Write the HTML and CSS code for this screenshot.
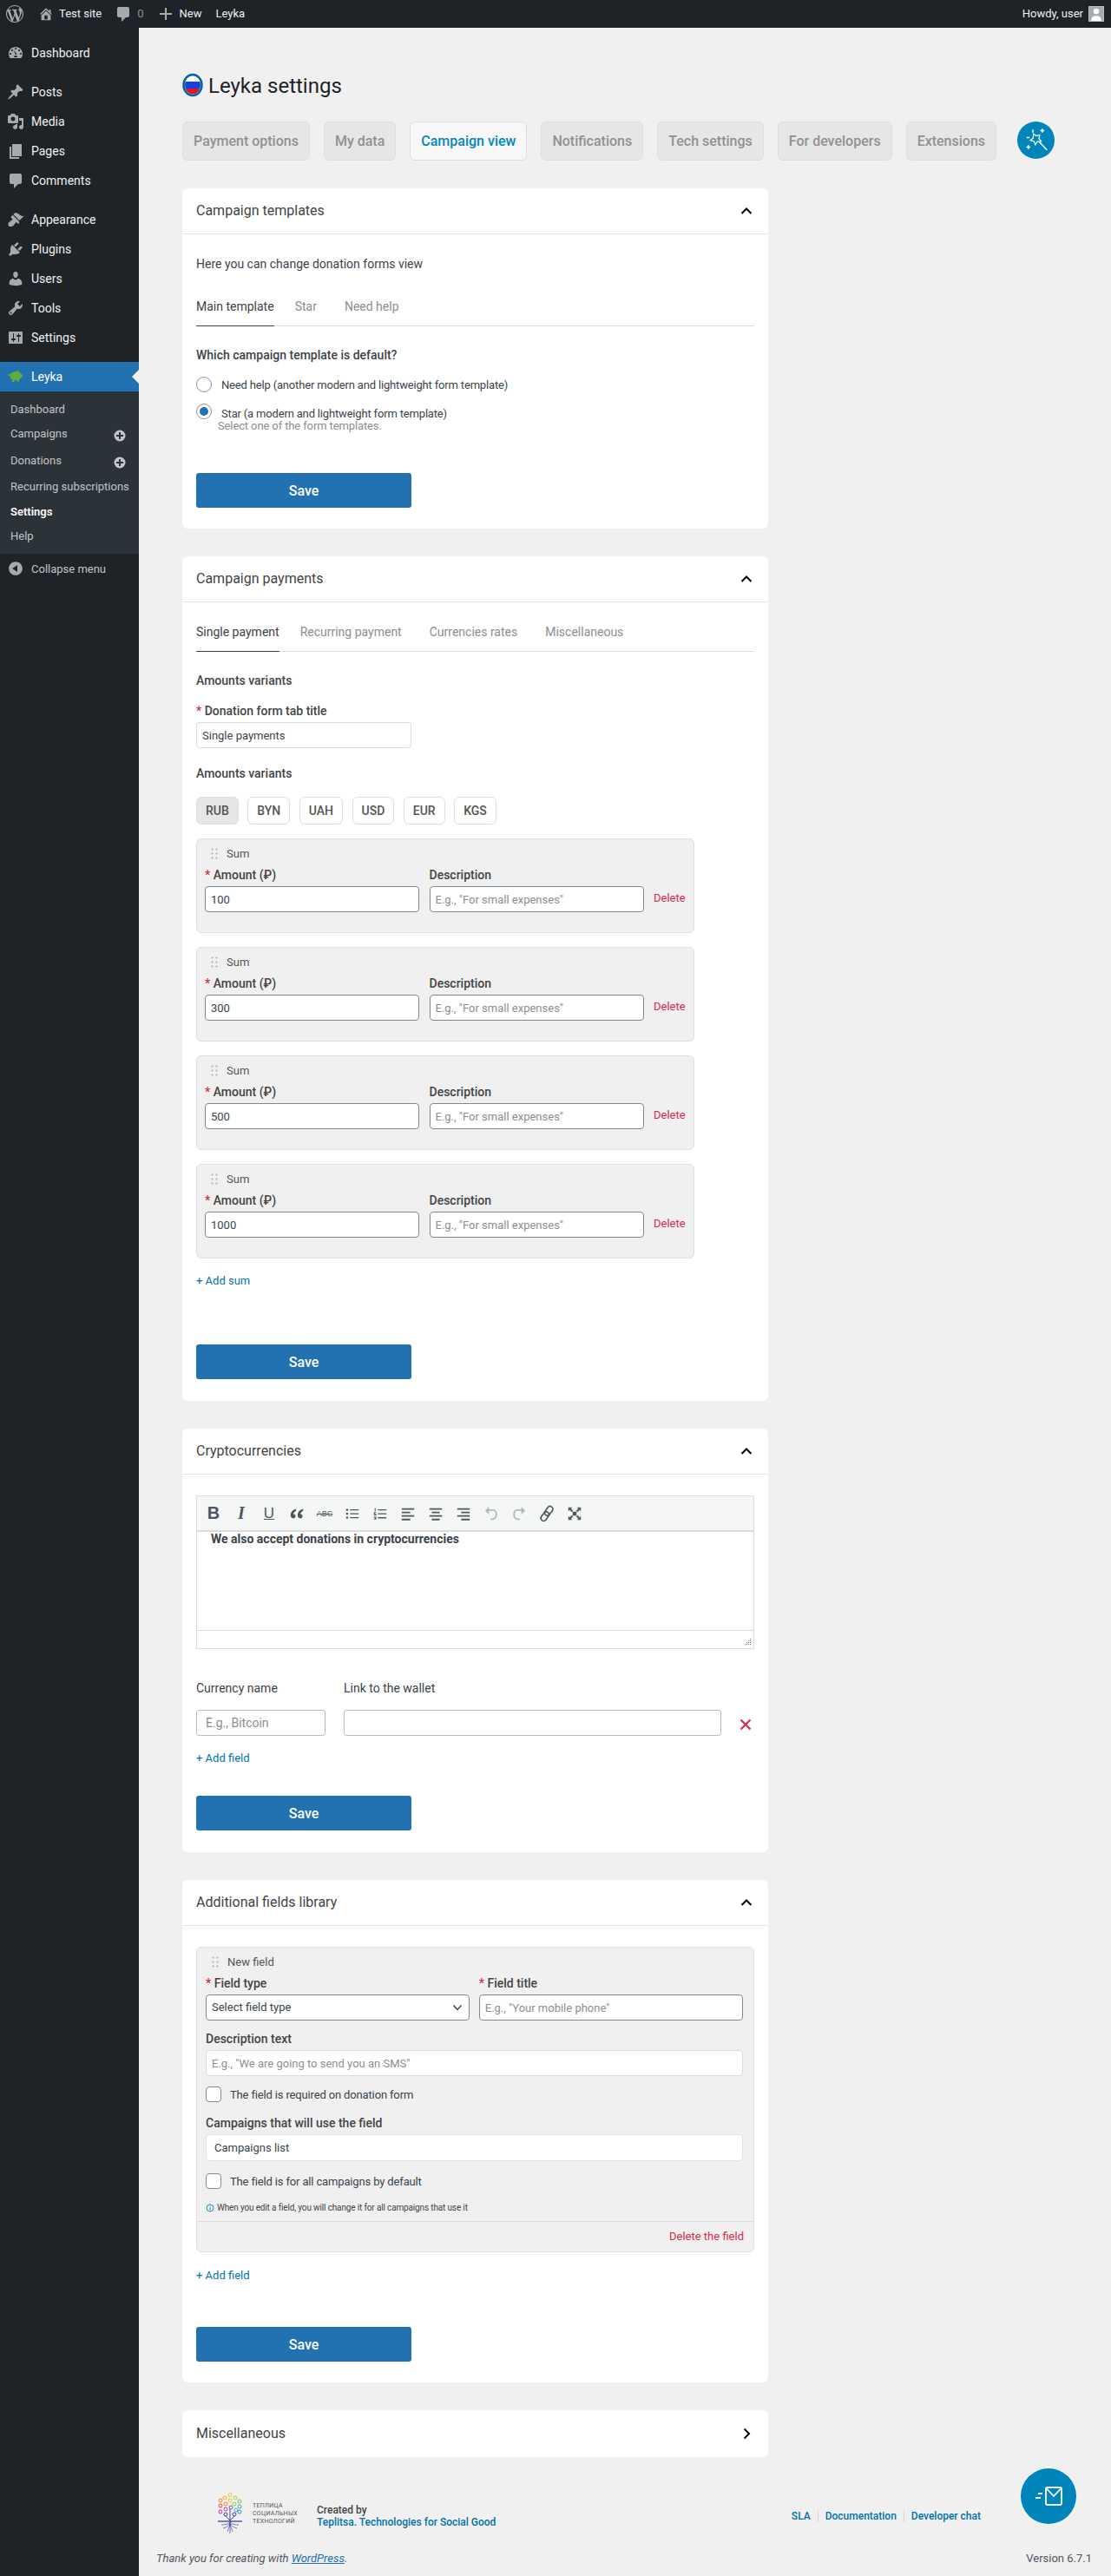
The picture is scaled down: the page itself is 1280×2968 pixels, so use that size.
FILE: index.html
```html
<!DOCTYPE html>
<html lang="en">
<head>
    <meta charset="UTF-8">
    <title>Leyka settings</title>
    <link rel="stylesheet" href="styles.css">
</head>
<body>
    <header class="adminbar">
        <a class="bar-item bar-logo"><svg class="bar-icon" viewBox="0 0 20 20"><path d="M20 10c0-5.51-4.49-10-10-10C4.48 0 0 4.49 0 10c0 5.52 4.48 10 10 10 5.51 0 10-4.48 10-10zM7.78 15.37L4.37 6.22c.55-.02 1.17-.08 1.17-.08.5-.06.44-1.13-.06-1.11 0 0-1.45.11-2.37.11-.18 0-.37 0-.58-.01C4.12 2.69 6.87 1.11 10 1.11c2.33 0 4.45.87 6.05 2.34-.68-.11-1.65.39-1.65 1.58 0 .74.45 1.36.9 2.1.35.61.55 1.36.55 2.46 0 1.49-1.4 5-1.4 5l-3.03-8.37c.54-.02.82-.17.82-.17.5-.05.44-1.25-.06-1.22 0 0-1.44.12-2.38.12-.87 0-2.33-.12-2.33-.12-.5-.03-.56 1.2-.06 1.22l.92.08 1.26 3.41zM17.41 10c.24-.64.74-1.87.43-4.25.7 1.29 1.05 2.71 1.05 4.25 0 3.29-1.73 6.24-4.4 7.78.97-2.59 1.94-5.2 2.92-7.78zM6.1 18.09C3.12 16.65 1.11 13.53 1.11 10c0-1.3.23-2.48.72-3.59C3.25 10.3 4.67 14.2 6.1 18.09zm4.03-6.63l2.58 6.98c-.86.29-1.76.45-2.71.45-.79 0-1.57-.11-2.29-.33.81-2.38 1.62-4.74 2.42-7.1z"/></svg></a>
        <a class="bar-item bar-site"><svg class="bar-icon" viewBox="0 0 20 20"><path d="M16 8.5l1.53 1.53-1.06 1.06L10 4.62l-6.47 6.47-1.06-1.06L10 2.5l4 4v-2h2v4zm-6-2.46l6 5.99V18H4v-5.97zM12 17v-5H8v5h4z"/></svg>Test site</a>
        <a class="bar-item bar-comments"><svg class="bar-icon" viewBox="0 0 20 20"><path d="M5 2h10c1.1 0 2 .9 2 2v8c0 1.1-.9 2-2 2h-2l-5 5v-5H5c-1.1 0-2-.9-2-2V4c0-1.1.9-2 2-2z"/></svg><span class="bar-count">0</span></a>
        <a class="bar-item bar-new"><svg class="bar-icon" viewBox="0 0 20 20"><path d="M11 3v6h6v2h-6v6H9v-6H3V9h6V3z"/></svg>New</a>
        <a class="bar-item bar-leyka">Leyka</a>
        <a class="bar-howdy">Howdy, user
            <span class="avatar"><svg viewBox="0 0 18 22"><circle cx="9" cy="7" r="4.5" fill="#fff"/><path d="M1 22c0-6 3-8 8-8s8 2 8 8z" fill="#fff"/></svg></span>
        </a>
    </header>

    <div class="layout">
        <aside class="sidebar">
            <nav class="menu">
                <a class="menu-item"><svg viewBox="0 0 20 20"><path fill-rule="evenodd" d="M3.76 16h12.48c1.1-1.37 1.76-3.11 1.76-5 0-4.42-3.58-8-8-8s-8 3.58-8 8c0 1.89.66 3.63 1.76 5zM10 4c.55 0 1 .45 1 1s-.45 1-1 1-1-.45-1-1 .45-1 1-1zM6 6c.55 0 1 .45 1 1s-.45 1-1 1-1-.45-1-1 .45-1 1-1zm2 9c0-1.1.9-2 2-2s2 .9 2 2H8zm2-3c-.55-.4-2-5-2-5l3.28 4.13c-.39.27-.86.87-1.28.87zM14 6c.55 0 1 .45 1 1s-.45 1-1 1-1-.45-1-1 .45-1 1-1zM4 10c.55 0 1 .45 1 1s-.45 1-1 1-1-.45-1-1 .45-1 1-1zm12 0c.55 0 1 .45 1 1s-.45 1-1 1-1-.45-1-1 .45-1 1-1z"/></svg>Dashboard</a>
                <div class="menu-sep"></div>
                <a class="menu-item"><svg viewBox="0 0 20 20"><path d="M10.44 3.02l1.82-1.82 6.36 6.35-1.83 1.82c-1.05-.68-2.48-.57-3.41.36l-.75.75c-.92.93-1.04 2.35-.35 3.41l-1.83 1.82-2.41-2.41-2.8 2.79c-.42.42-3.38 2.71-3.8 2.29s1.86-3.39 2.28-3.81l2.79-2.79L4.1 9.36l1.83-1.82c1.05.69 2.48.57 3.4-.36l.75-.75c.93-.92 1.05-2.35.36-3.41z"/></svg>Posts</a>
                <a class="menu-item"><svg viewBox="0 0 20 20"><path fill-rule="evenodd" d="M13 11V4c0-.55-.45-1-1-1h-1.67L9 1H5L3.67 3H2c-.55 0-1 .45-1 1v7c0 .55.45 1 1 1h10c.55 0 1-.45 1-1zM7 4.5c1.38 0 2.5 1.12 2.5 2.5S8.38 9.5 7 9.5 4.5 8.38 4.5 7 5.62 4.5 7 4.5zM14 6h5v10.5c0 1.38-1.12 2.5-2.5 2.5S14 17.88 14 16.5s1.12-2.5 2.5-2.5c.17 0 .34.02.5.05V9h-3V6zm-4 8.05V13h2v3.5c0 1.38-1.12 2.5-2.5 2.5S7 17.88 7 16.5 8.12 14 9.5 14c.17 0 .34.02.5.05z"/></svg>Media</a>
                <a class="menu-item"><svg viewBox="0 0 20 20"><path d="M6 2h11v14H6zM3 5h2v12h9v2H3z"/></svg>Pages</a>
                <a class="menu-item"><svg viewBox="0 0 20 20"><path d="M5 2h10c1.1 0 2 .9 2 2v8c0 1.1-.9 2-2 2h-2l-5 5v-5H5c-1.1 0-2-.9-2-2V4c0-1.1.9-2 2-2z"/></svg>Comments</a>
                <div class="menu-sep"></div>
                <a class="menu-item"><svg viewBox="0 0 20 20"><path d="M14.48 11.06L7.41 3.99l1.5-1.5c.5-.56 2.3-.47 3.51.32 1.21.8 1.43 1.28 2.91 2.1 1.18.64 2.45 1.26 4.45.85zm-.71.71L6.7 4.7 4.93 6.47c-.39.39-.39 1.02 0 1.41l1.06 1.06c.39.39.39 1.03 0 1.42-.6.6-1.43 1.11-2.21 1.69-.35.26-.7.53-1.01.84C1.43 13.23.91 15.09 2 17.5c2.41 1.09 4.27.57 5.61-.77.31-.31.58-.66.84-1.01.58-.78 1.09-1.61 1.69-2.21.39-.39 1.03-.39 1.42 0l1.06 1.06c.39.39 1.02.39 1.41 0z"/></svg>Appearance</a>
                <a class="menu-item"><svg viewBox="0 0 20 20"><path d="M13.11 4.36L9.87 7.6 8 5.73l3.24-3.24c.35-.34 1.05-.2 1.56.32.52.51.66 1.21.31 1.55zm-8 1.77l.91-1.12 9.01 9.01-1.19.84c-.71.71-2.63 1.16-3.82 1.16H6.14L4.9 17.26c-.59.59-1.54.59-2.12 0-.59-.58-.59-1.53 0-2.12l1.24-1.24v-3.88c0-1.13.4-3.19 1.09-3.89zm7.26 3.97l3.24-3.24c.34-.35 1.04-.21 1.55.31.52.51.66 1.21.31 1.55l-3.24 3.25z"/></svg>Plugins</a>
                <a class="menu-item"><svg viewBox="0 0 20 20"><path d="M10 9.25c-2.27 0-2.73-3.44-2.73-3.44C7 4.02 7.82 2 9.97 2c2.16 0 2.98 2.02 2.71 3.81 0 0-.41 3.44-2.68 3.44zm0 2.57L12.72 10c2.39 0 4.52 2.33 4.52 4.53v2.49s-3.65 1.13-7.24 1.13c-3.65 0-7.24-1.13-7.24-1.13v-2.49c0-2.25 1.94-4.48 4.47-4.48z"/></svg>Users</a>
                <a class="menu-item"><svg viewBox="0 0 20 20"><path fill-rule="evenodd" d="M16.68 9.77c-1.34 1.34-3.3 1.67-4.95.99l-5.41 6.52c-.99.99-2.59.99-3.58 0s-.99-2.59 0-3.57l6.52-5.42c-.68-1.65-.35-3.61.99-4.95 1.28-1.28 3.12-1.62 4.72-1.06l-2.89 2.89 2.82 2.82 2.86-2.87c.53 1.58.18 3.39-1.08 4.65zM3.81 16.21c.4.39 1.04.39 1.43 0 .4-.4.4-1.04 0-1.43-.39-.4-1.03-.4-1.43 0-.39.39-.39 1.03 0 1.43z"/></svg>Tools</a>
                <a class="menu-item"><svg viewBox="0 0 20 20"><path fill-rule="evenodd" d="M18 16V4c0-.55-.45-1-1-1H3c-.55 0-1 .45-1 1v12c0 .55.45 1 1 1h14c.55 0 1-.45 1-1zM8 11h1c.55 0 1 .45 1 1s-.45 1-1 1H8v1.5c0 .28-.22.5-.5.5s-.5-.22-.5-.5V13H6c-.55 0-1-.45-1-1s.45-1 1-1h1V5.5c0-.28.22-.5.5-.5s.5.22.5.5V11zm5-2h-1c-.55 0-1-.45-1-1s.45-1 1-1h1V5.5c0-.28.22-.5.5-.5s.5.22.5.5V7h1c.55 0 1 .45 1 1s-.45 1-1 1h-1v5.5c0 .28-.22.5-.5.5s-.5-.22-.5-.5V9z"/></svg>Settings</a>
                <div class="menu-sep"></div>
                <a class="menu-item current"><svg viewBox="0 0 20 20"><path fill="#5fae3c" d="M4 7c1-2 4-3 7-3 1 0 1.500-1 2.500-1.500L13.500 4.500C15 5 16 6 16.500 7.500H18v3h-1.500c-.5 1.500-1.500 2.500-2.500 3v2h-2.500v-1.500h-3V16H6v-2.500C4 12.500 3 10 4 7z"/><circle cx="2.500" cy="8" r="1.200" fill="#5fae3c"/></svg>Leyka</a>
                <div class="submenu">
                    <a class="sub-item">Dashboard</a>
                    <a class="sub-item">Campaigns<svg class="sub-plus" viewBox="0 0 14 14"><circle cx="7" cy="7" r="6.500" fill="#c3c4c7"/><path d="M6 3h2v3h3v2H8v3H6V8H3V6h3z" fill="#2c3338"/></svg></a>
                    <a class="sub-item sub-donations">Donations<svg class="sub-plus" viewBox="0 0 14 14"><circle cx="7" cy="7" r="6.500" fill="#c3c4c7"/><path d="M6 3h2v3h3v2H8v3H6V8H3V6h3z" fill="#2c3338"/></svg></a>
                    <a class="sub-item sub-recurring">Recurring subscriptions</a>
                    <a class="sub-item sub-active">Settings</a>
                    <a class="sub-item">Help</a>
                </div>
                <a class="menu-item collapse"><svg viewBox="0 0 20 20"><path d="M10 2.160c4.330 0 7.840 3.510 7.840 7.840s-3.510 7.840-7.840 7.840S2.160 14.330 2.160 10 5.710 2.160 10 2.160zm2 11.720V6.120L6.180 9.970z"/></svg>Collapse menu</a>
            </nav>
        </aside>

        <main class="content">
            <h1 class="page-title">
                <svg class="flag" viewBox="0 0 24 28"><defs><clipPath id="flag-clip"><ellipse cx="12" cy="14" rx="9" ry="10.500"/></clipPath></defs><g clip-path="url(#flag-clip)"><rect width="24" height="10" fill="#fff"/><rect y="10" width="24" height="8" fill="#1742d6"/><rect y="18" width="24" height="10" fill="#e0122c"/></g><ellipse cx="12" cy="14" rx="10.500" ry="12" fill="none" stroke="#00659c" stroke-width="2.500"/></svg>
                Leyka settings
            </h1>

            <div class="main-tabs">
                <a class="main-tab">Payment options</a>
                <a class="main-tab">My data</a>
                <a class="main-tab active">Campaign view</a>
                <a class="main-tab">Notifications</a>
                <a class="main-tab">Tech settings</a>
                <a class="main-tab">For developers</a>
                <a class="main-tab">Extensions</a>
                <a class="wand">
                    <svg viewBox="0 0 44 44" fill="none" stroke="#fff" stroke-width="1.300">
                        <path d="M19 14.500l3.500 2.500 4-1.300-1 4.300 2.600 3.300-4.300.3-2.500 3.700-1.600-4-4.200-1.200 3.300-2.800z"/>
                        <path d="M26 24l9 9.500" stroke-width="1.600"/>
                        <path d="M18.500 9.500v3.500M11 19h3.500M29.500 8.500v4.500M27.200 10.700h4.600M13 28v4.500M10.700 30.200h4.600" stroke-width="1.500"/>
                    </svg>
                </a>
            </div>

            <section class="card card-templates">
                <div class="card-head">
                    <h2>Campaign templates</h2>
                    <svg class="chevron" viewBox="0 0 14 14"><path d="M1.500 10L7 4.500 12.500 10" fill="none" stroke="#000" stroke-width="2"/></svg>
                </div>
                <div class="card-body">
                    <p class="intro">Here you can change donation forms view</p>
                    <div class="sub-tabs">
                        <a class="sub-tab active">Main template</a>
                        <a class="sub-tab">Star</a>
                        <a class="sub-tab">Need help</a>
                    </div>
                    <div class="question">Which campaign template is default?</div>
                    <label class="radio-row"><input type="radio" name="tpl"><span>Need help (another modern and lightweight form template)</span></label>
                    <label class="radio-row radio-second"><input type="radio" name="tpl" checked><span>Star (a modern and lightweight form template)</span></label>
                    <div class="hint">Select one of the form templates.</div>
                    <button class="save save-templates">Save</button>
                </div>
            </section>

            <section class="card">
                <div class="card-head">
                    <h2>Campaign payments</h2>
                    <svg class="chevron" viewBox="0 0 14 14"><path d="M1.500 10L7 4.500 12.500 10" fill="none" stroke="#000" stroke-width="2"/></svg>
                </div>
                <div class="card-body">
                    <div class="sub-tabs sub-tabs-payments">
                        <a class="sub-tab active">Single payment</a>
                        <a class="sub-tab">Recurring payment</a>
                        <a class="sub-tab">Currencies rates</a>
                        <a class="sub-tab">Miscellaneous</a>
                    </div>
                    <h3 class="section-title first">Amounts variants</h3>
                    <div class="field-label tab-title-label"><i>*</i> Donation form tab title</div>
                    <input class="text-input soft tab-title-input" value="Single payments">
                    <h3 class="section-title">Amounts variants</h3>
                    <div class="currencies">
                        <a class="currency active">RUB</a>
                        <a class="currency">BYN</a>
                        <a class="currency">UAH</a>
                        <a class="currency">USD</a>
                        <a class="currency">EUR</a>
                        <a class="currency">KGS</a>
                    </div>

                    <div class="sum-box">
                        <div class="box-head"><span class="drag"></span>Sum</div>
                        <div class="sum-row">
                            <div class="sum-col"><div class="field-label"><i>*</i> Amount (₽)</div><input class="text-input" value="100"></div>
                            <div class="sum-col"><div class="field-label">Description</div><input class="text-input" placeholder="E.g., &quot;For small expenses&quot;"></div>
                            <a class="delete">Delete</a>
                        </div>
                    </div>
                    <div class="sum-box">
                        <div class="box-head"><span class="drag"></span>Sum</div>
                        <div class="sum-row">
                            <div class="sum-col"><div class="field-label"><i>*</i> Amount (₽)</div><input class="text-input" value="300"></div>
                            <div class="sum-col"><div class="field-label">Description</div><input class="text-input" placeholder="E.g., &quot;For small expenses&quot;"></div>
                            <a class="delete">Delete</a>
                        </div>
                    </div>
                    <div class="sum-box">
                        <div class="box-head"><span class="drag"></span>Sum</div>
                        <div class="sum-row">
                            <div class="sum-col"><div class="field-label"><i>*</i> Amount (₽)</div><input class="text-input" value="500"></div>
                            <div class="sum-col"><div class="field-label">Description</div><input class="text-input" placeholder="E.g., &quot;For small expenses&quot;"></div>
                            <a class="delete">Delete</a>
                        </div>
                    </div>
                    <div class="sum-box">
                        <div class="box-head"><span class="drag"></span>Sum</div>
                        <div class="sum-row">
                            <div class="sum-col"><div class="field-label"><i>*</i> Amount (₽)</div><input class="text-input" value="1000"></div>
                            <div class="sum-col"><div class="field-label">Description</div><input class="text-input" placeholder="E.g., &quot;For small expenses&quot;"></div>
                            <a class="delete">Delete</a>
                        </div>
                    </div>
                    <a class="add-link add-sum">+ Add sum</a>
                    <button class="save save-payments">Save</button>
                </div>
            </section>

            <section class="card">
                <div class="card-head">
                    <h2>Cryptocurrencies</h2>
                    <svg class="chevron" viewBox="0 0 14 14"><path d="M1.500 10L7 4.500 12.500 10" fill="none" stroke="#000" stroke-width="2"/></svg>
                </div>
                <div class="card-body crypto-body">
                    <div class="editor">
                        <div class="toolbar">
                            <span class="tool tool-b">B</span>
                            <span class="tool tool-i">I</span>
                            <span class="tool tool-u">U</span>
                            <span class="tool"><svg viewBox="0 0 20 20"><path d="M9 4C5 5 2 8 2 12c0 2.200 1 4 3.300 4 1.700 0 3-1.200 3-2.800S7.200 10.400 5.500 10.600C5.700 8.700 7.300 7 9 6.300zM18 4c-4 1-7 4-7 8 0 2.200 1 4 3.300 4 1.700 0 3-1.200 3-2.800s-1.100-2.800-2.800-2.600c.2-1.900 1.800-3.600 3.500-4.300z"/></svg></span>
                            <span class="tool tool-abc">ABC</span>
                            <span class="tool"><svg viewBox="0 0 20 20"><path d="M2 4h2.500v2.500H2zM2 9h2.500v2.500H2zM2 14h2.500v2.500H2zM7 4.500h11v1.200H7zM7 9.500h11v1.200H7zM7 14.500h11v1.200H7z"/></svg></span>
                            <span class="tool"><svg viewBox="0 0 20 20"><path d="M7 4.500h11v1.200H7zM7 9.500h11v1.200H7zM7 14.500h11v1.500H7zM3 3h1.200v4H3zM2 8h3v1H3.500v1H5v2.500H2v-1h2v-.7H2zM2 14h3v3.500H2v-1h2V16H3v-.7h1V15H2z"/></svg></span>
                            <span class="tool"><svg viewBox="0 0 20 20"><path d="M2 3h16v2H2zM2 7.500h11v2H2zM2 12h16v2H2zM2 16.500h11v2H2z"/></svg></span>
                            <span class="tool"><svg viewBox="0 0 20 20"><path d="M2 3h16v2H2zM5 7.500h10v2H5zM2 12h16v2H2zM5 16.500h10v2H5z"/></svg></span>
                            <span class="tool"><svg viewBox="0 0 20 20"><path d="M2 3h16v2H2zM7 7.500h11v2H7zM2 12h16v2H2zM7 16.500h11v2H7z"/></svg></span>
                            <span class="tool tool-off"><svg viewBox="0 0 20 20"><path d="M2 6l5-5v3.500h5.500c3 0 5 2.500 5 6.500s-2.500 7-6 7H9v-2h2.500c2.500 0 4-2 4-5s-1.200-4.500-3-4.500H7V11z"/></svg></span>
                            <span class="tool tool-off"><svg viewBox="0 0 20 20"><path d="M18 6l-5-5v3.500H7.500c-3 0-5 2.500-5 6.500s2.500 7 6 7H11v-2H8.500c-2.500 0-4-2-4-5s1.200-4.500 3-4.500H13V11z"/></svg></span>
                            <span class="tool"><svg class="link-icon" viewBox="0 0 20 20"><g transform="rotate(-55 10 10)"><rect x=".5" y="6.800" width="11.500" height="6.400" rx="3.200"/><rect x="8" y="6.800" width="11.500" height="6.400" rx="3.200"/></g></svg></span>
                            <span class="tool"><svg viewBox="0 0 20 20"><path d="M2 2h5l-1.700 1.700L8 6.500 6.500 8 3.700 5.300 2 7zM18 2v5l-1.700-1.700L13.500 8 12 6.500l2.700-2.800L13 2zM2 18v-5l1.700 1.700L6.500 12 8 13.500l-2.700 2.800L7 18zM18 18h-5l1.700-1.700L12 13.500l1.500-1.500 2.800 2.700L18 13z"/><rect x="7.500" y="7.500" width="5" height="5"/></svg></span>
                        </div>
                        <div class="editor-text">We also accept donations in cryptocurrencies</div>
                        <div class="editor-status"><svg viewBox="0 0 10 10"><path d="M8 1h1v1H8zM8 3h1v1H8zM6 3h1v1H6zM8 5h1v1H8zM6 5h1v1H6zM4 5h1v1H4zM8 7h1v1H8zM6 7h1v1H6zM4 7h1v1H4zM2 7h1v1H2z" fill="#777"/></svg></div>
                    </div>
                    <div class="wallet-labels">
                        <span class="wallet-name">Currency name</span>
                        <span>Link to the wallet</span>
                    </div>
                    <div class="wallet-row">
                        <input class="text-input grey wallet-input-name" placeholder="E.g., Bitcoin">
                        <input class="text-input grey wallet-input-link">
                        <svg class="wallet-x" viewBox="0 0 14 14"><path d="M1.500 1.500l11 11M12.500 1.500l-11 11" stroke="#d72a4d" stroke-width="2.200"/></svg>
                    </div>
                    <a class="add-link add-wallet">+ Add field</a>
                    <button class="save save-crypto">Save</button>
                </div>
            </section>

            <section class="card">
                <div class="card-head">
                    <h2>Additional fields library</h2>
                    <svg class="chevron" viewBox="0 0 14 14"><path d="M1.500 10L7 4.500 12.500 10" fill="none" stroke="#000" stroke-width="2"/></svg>
                </div>
                <div class="card-body fields-body">
                    <div class="field-box">
                        <div class="field-main">
                            <div class="box-head"><span class="drag"></span>New field</div>
                            <div class="field-pair">
                                <div class="pair-col">
                                    <div class="field-label"><i>*</i> Field type</div>
                                    <div class="select-like">Select field type<svg viewBox="0 0 12 12"><path d="M1.500 3.500L6 8.500l4.500-5" fill="none" stroke="#444" stroke-width="1.500"/></svg></div>
                                </div>
                                <div class="pair-col">
                                    <div class="field-label"><i>*</i> Field title</div>
                                    <input class="text-input" placeholder="E.g., &quot;Your mobile phone&quot;">
                                </div>
                            </div>
                            <div class="field-label desc-label">Description text</div>
                            <input class="text-input soft wide" placeholder="E.g., &quot;We are going to send you an SMS&quot;">
                            <label class="check-row"><input type="checkbox"><span>The field is required on donation form</span></label>
                            <div class="field-label campaigns-label">Campaigns that will use the field</div>
                            <div class="campaigns-list">Campaigns list</div>
                            <label class="check-row check-all"><input type="checkbox"><span>The field is for all campaigns by default</span></label>
                            <div class="field-note"><svg viewBox="0 0 10 10"><circle cx="5" cy="5" r="4" fill="none" stroke="#1f8fc4"/><path d="M4.500 4.300h1v3.200h-1zM4.500 2.500h1v1h-1z" fill="#1f8fc4"/></svg>When you edit a field, you will change it for all campaigns that use it</div>
                        </div>
                        <div class="field-foot"><a class="delete">Delete the field</a></div>
                    </div>
                    <a class="add-link add-field">+ Add field</a>
                    <button class="save save-fields">Save</button>
                </div>
            </section>

            <section class="card card-closed">
                <div class="card-head">
                    <h2>Miscellaneous</h2>
                    <svg class="chevron" viewBox="0 0 14 14"><path d="M4.500 1.500L10 7l-5.500 5.500" fill="none" stroke="#000" stroke-width="2"/></svg>
                </div>
            </section>

            <div class="credits">
                <div class="credits-left">
                    <svg class="tree" viewBox="0 0 28 48" fill="none" stroke-width="1">
                        <circle cx="14" cy="2.500" r="2" stroke="#f2c230"/><circle cx="8" cy="6" r="2" stroke="#f5b02a"/><circle cx="20" cy="6" r="2" stroke="#b9cf35"/>
                        <circle cx="3" cy="9" r="2" stroke="#f58a1f"/><circle cx="14" cy="9" r="2" stroke="#f2c230"/><circle cx="25" cy="10" r="2" stroke="#7fbf4d"/>
                        <circle cx="3" cy="15" r="2" stroke="#ee3b44"/><circle cx="9" cy="13" r="2" stroke="#f58a1f"/><circle cx="19" cy="13" r="2" stroke="#8cc63f"/><circle cx="25" cy="16" r="2" stroke="#3fa9a0"/>
                        <circle cx="3" cy="22" r="2" stroke="#e4287c"/><circle cx="9" cy="19" r="2" stroke="#c2398f"/><circle cx="15" cy="17" r="2" stroke="#6a5bb0"/><circle cx="21" cy="20" r="2" stroke="#3fa9c9"/><circle cx="25" cy="22" r="2" stroke="#2f89c5"/>
                        <circle cx="9" cy="25" r="2" stroke="#36469c"/><circle cx="19" cy="25" r="2" stroke="#36469c"/>
                        <path d="M14 19v20M9 27l5 5 5-5" stroke="#36469c"/><path d="M0 33h28" stroke="#36469c" stroke-width="1.300"/>
                        <path d="M14 34c-3 3-7 3-10 3M14 35c-2 4-5 5-8 6M14 36c-1 4-2 6-3 9M14 36v11M14 36c1 4 2 6 3 9M14 35c2 4 5 5 8 6M14 34c3 3 7 3 10 3" stroke="#36469c" stroke-width=".7"/>
                    </svg>
                    <div class="tree-text">ТЕПЛИЦА<br>СОЦИАЛЬНЫХ<br>ТЕХНОЛОГИЙ</div>
                    <div class="created">Created by<br><a>Teplitsa. Technologies for Social Good</a></div>
                </div>
                <div class="credits-links">
                    <a>SLA</a><a>Documentation</a><a>Developer chat</a>
                </div>
            </div>

            <footer class="wp-footer">
                <span class="thanks">Thank you for creating with <a>WordPress</a>.</span>
                <span>Version 6.7.1</span>
            </footer>
        </main>
    </div>

    <a class="fab">
        <svg viewBox="0 0 64 64" fill="none" stroke="#fff" stroke-width="1.800">
            <rect x="29" y="22" width="18" height="20" rx="1.500"/>
            <path d="M29.500 23l8.500 9 8.500-9"/>
            <path d="M17 34h6M20 29h5" stroke-width="2"/>
        </svg>
    </a>
</body>
</html>
```

FILE: styles.css
```css
* {
    box-sizing: border-box;
}

body {
    margin: 0;
    background: #f0f0f0;
    color: #3c434a;
    font-family: Roboto, sans-serif;
    font-size: 13px;
}

a {
    text-decoration: none;
    color: inherit;
}

/* top bar */
.adminbar {
    height: 32px;
    background: #1d2327;
    color: #f0f0f1;
    display: flex;
    align-items: center;
    line-height: 32px;
}

.bar-item {
    display: flex;
    align-items: center;
    height: 32px;
}

.bar-icon {
    width: 20px;
    height: 20px;
    fill: #a7aaad;
}

.bar-logo { margin-left: 7px; }
.bar-site { margin-left: 17px; }
.bar-site .bar-icon { width: 18px; height: 18px; margin-right: 6px; }
.bar-comments { margin-left: 15px; }
.bar-comments .bar-icon { margin-right: 6px; }
.bar-count { color: #8c8f94; }
.bar-new { margin-left: 15px; }
.bar-new .bar-icon { margin-right: 6px; }
.bar-leyka { margin-left: 16px; }

.bar-howdy {
    margin-left: auto;
    margin-right: 8px;
    display: flex;
    align-items: center;
    gap: 6px;
}

.avatar {
    width: 18px;
    height: 18px;
    background: #a7aaad;
    border: 1px solid #bbb;
    display: block;
    overflow: hidden;
}

.avatar svg {
    display: block;
    width: 16px;
    height: 16px;
}

/* page frame */
.layout {
    display: flex;
    height: 2936px;
}

.sidebar {
    width: 160px;
    flex: none;
    background: #1d2327;
    padding-top: 12px;
}

.menu-item {
    display: flex;
    align-items: center;
    height: 34px;
    color: #f0f0f1;
    font-size: 14px;
    padding-left: 8px;
}

.menu-item svg {
    width: 20px;
    height: 20px;
    margin-right: 8px;
    margin-left: 0;
    fill: #a7aaad;
    flex: none;
}

.menu-sep {
    height: 11px;
}

.menu-item.current {
    background: #2271b1;
    color: #fff;
    position: relative;
}

.menu-item.current::after {
    content: "";
    position: absolute;
    right: 0;
    top: 9px;
    border: 8px solid transparent;
    border-right-color: #f0f0f0;
    border-left-width: 0;
}

.submenu {
    background: #2c3338;
    height: 187px;
    padding-top: 6px;
}

.sub-item {
    display: flex;
    align-items: center;
    justify-content: space-between;
    height: 28px;
    padding: 0 15px 0 12px;
    color: #c3c4c7;
    font-size: 13px;
    white-space: nowrap;
}

.sub-donations { height: 30px; margin-top: 2px; }
.sub-recurring { height: 30px; }
.sub-active { color: #fff; font-weight: 600; }

.sub-plus {
    width: 14px;
    height: 14px;
    margin-top: 5px;
}

.menu-item.collapse {
    color: #c3c4c7;
    font-size: 13px;
    margin-top: 0;
}

/* settings area */
.content {
    flex: 1;
    padding-left: 50px;
    position: relative;
}

.page-title {
    margin: 0;
    padding-top: 49px;
    height: 108px;
    display: flex;
    align-items: flex-start;
    font-size: 24px;
    font-weight: 400;
    line-height: 36px;
    color: #1d2327;
}

.flag {
    width: 24px;
    height: 28px;
    margin-top: 3px;
    margin-right: 6px;
}

.main-tabs {
    display: flex;
    gap: 16px;
    align-items: flex-start;
}

.main-tab {
    height: 45px;
    line-height: 43px;
    padding: 0 12px;
    background: #e6e6e6;
    border: 1px solid #dedede;
    border-radius: 6px;
    font-size: 16px;
    font-weight: 500;
    color: #919191;
}

.main-tab.active {
    background: #f7f7f7;
    color: #0088bb;
}

.wand {
    width: 43px;
    height: 43px;
    border-radius: 50%;
    background: #0085ba;
    margin-left: 8px;
}

.wand svg {
    display: block;
}

.card {
    width: 675px;
    background: #fff;
    border-radius: 6px;
    margin-bottom: 32px;
}

.main-tabs + .card {
    margin-top: 32px;
}

.card-head {
    height: 53px;
    padding: 0 16px;
    border-bottom: 1px solid #e4e4e4;
    display: flex;
    align-items: center;
    justify-content: space-between;
}

.card-head h2 {
    margin: 0;
    font-size: 16px;
    font-weight: 400;
    color: #444;
    padding-bottom: 2px;
}

.chevron {
    width: 14px;
    height: 14px;
    margin-right: 2px;
}

.card-closed .card-head {
    height: 54px;
    border-bottom: 0;
}

.card-body {
    padding: 0 16px 24px;
}

.intro {
    margin: 0;
    padding-top: 24px;
    font-size: 14px;
    line-height: 20px;
    color: #3c434a;
}

.sub-tabs {
    display: flex;
    gap: 24px;
    margin-top: 29px;
    border-bottom: 1px solid #dcdcdc;
    font-size: 14px;
    line-height: 20px;
}

.sub-tab {
    padding-bottom: 12px;
    padding-right: 8px;
    color: #8e8e8e;
    margin-bottom: -1px;
}

.sub-tab.active {
    color: #3c434a;
    padding-right: 0;
    border-bottom: 1px solid #3c434a;
}

.question {
    margin-top: 23px;
    font-size: 14px;
    line-height: 20px;
    font-weight: 500;
    color: #3c434a;
}

.radio-row {
    display: flex;
    align-items: center;
    height: 18px;
    margin-top: 15px;
    font-size: 13px;
    letter-spacing: -.17px;
    color: #3c434a;
}

.radio-row input {
    appearance: none;
    width: 18px;
    height: 18px;
    margin: 0 11px 0 0;
    border: 1px solid #8c8f94;
    border-radius: 50%;
    background: #fff;
    position: relative;
}

.radio-row input:checked::after {
    content: "";
    position: absolute;
    left: 3px;
    top: 3px;
    width: 10px;
    height: 10px;
    border-radius: 50%;
    background: #2271b1;
}

.radio-second {
    margin-top: 13px;
}

.radio-second span {
    padding-top: 4px;
}

.hint {
    margin-left: 25px;
    font-size: 13px;
    letter-spacing: -.12px;
    line-height: 16px;
    color: #8e8e8e;
}

.save {
    display: block;
    width: 248px;
    height: 40px;
    border: 0;
    border-radius: 3px;
    background: #2271b1;
    color: #fff;
    font-family: inherit;
    font-size: 16px;
    font-weight: 500;
}

.save-templates {
    margin-top: 46px;
}

.sub-tabs-payments {
    margin-top: 24px;
}

.section-title {
    margin: 19px 0 0;
    font-size: 14px;
    line-height: 20px;
    font-weight: 500;
    color: #444;
}

.section-title.first {
    margin-top: 23px;
}

.field-label {
    font-size: 14px;
    font-weight: 500;
    line-height: 18px;
    color: #444;
}

.field-label i {
    color: #d72a4d;
    font-style: normal;
}

.tab-title-label {
    margin-top: 16px;
}

.text-input {
    display: block;
    width: 100%;
    height: 30px;
    padding: 0 6px;
    border: 1px solid #7e8993;
    border-radius: 4px;
    background: #fff;
    font-family: inherit;
    font-size: 13px;
    color: #3c434a;
}

.text-input::placeholder {
    color: #8e8e8e;
}

.text-input.soft {
    border-color: #dcdcdc;
}

.text-input.grey {
    border-color: #bdbdbd;
    border-radius: 3px;
}

.tab-title-input {
    width: 248px;
    margin-top: 4px;
}

.currencies {
    display: flex;
    gap: 10.500px;
    margin-top: 17px;
}

.currency {
    height: 32px;
    line-height: 30px;
    padding: 0 10px;
    border: 1px solid #dedede;
    border-radius: 6px;
    background: #fff;
    font-size: 14px;
    font-weight: 500;
    color: #555;
}

.currency.active {
    background: #e6e6e6;
}

.sum-box {
    width: 574px;
    height: 109px;
    margin-top: 16px;
    background: #f0f0f0;
    border: 1px solid #dedede;
    border-radius: 6px;
    padding: 0 9px;
}

.box-head {
    display: flex;
    align-items: center;
    height: 32px;
    font-size: 13px;
    color: #555;
}

.drag {
    width: 10px;
    height: 14px;
    margin: 0 9px 0 6px;
    background-image: radial-gradient(circle, #c4c4c4 1px, transparent 1.200px);
    background-size: 5px 5px;
}

.sum-row {
    display: flex;
    gap: 11.500px;
    align-items: flex-start;
}

.sum-col {
    width: 247px;
}

.sum-col .text-input {
    margin-top: 4px;
}

.delete {
    color: #d72a4d;
    font-size: 13px;
}

.sum-row .delete {
    margin-top: 28px;
    line-height: 16px;
}

.add-link {
    display: block;
    font-size: 13px;
    line-height: 18px;
    color: #0073aa;
}

.add-sum {
    margin-top: 17px;
}

.save-payments {
    margin-top: 64px;
}

.card-body:has(.save-payments),
.crypto-body {
    padding-bottom: 25px;
}

/* crypto */
.crypto-body {
    padding-top: 24px;
}

.editor {
    border: 1px solid #dcdcdc;
}

.toolbar {
    display: flex;
    align-items: center;
    height: 41px;
    padding-left: 3px;
    background: #f5f6f6;
    border-bottom: 2px solid #dcdcdc;
}

.tool {
    width: 32px;
    height: 20px;
    display: flex;
    justify-content: center;
    align-items: center;
    color: #50575e;
}

.tool svg {
    width: 18px;
    height: 18px;
    fill: #50575e;
}

.tool svg.link-icon {
    width: 20px;
    height: 20px;
    fill: none;
    stroke: #50575e;
    stroke-width: 1.600;
}

.tool-b { font-size: 20px; font-weight: 700; font-family: "Liberation Sans", sans-serif; }
.tool-i { font-size: 20px; font-weight: 700; font-style: italic; font-family: "Liberation Serif", serif; }
.tool-u { font-size: 17px; text-decoration: underline; font-family: "Liberation Sans", sans-serif; }
.tool-abc { font-size: 9px; text-decoration: line-through; font-family: "Liberation Sans", sans-serif; }
.tool-off svg { fill: #b4b9be; }

.editor-text {
    height: 114px;
    padding: 0 16px;
    font-size: 14px;
    font-weight: 700;
    line-height: 16px;
    color: #3c434a;
    border-bottom: 1px solid #dcdcdc;
}

.editor-status {
    height: 20px;
    display: flex;
    justify-content: flex-end;
    align-items: flex-end;
    padding: 0 2px 2px 0;
}

.editor-status svg {
    width: 10px;
    height: 10px;
}

.wallet-labels {
    display: flex;
    margin-top: 35px;
    font-size: 14px;
    line-height: 20px;
    color: #3c434a;
}

.wallet-name {
    width: 170px;
}

.wallet-row {
    display: flex;
    align-items: center;
    margin-top: 15px;
}

.wallet-input-name {
    width: 149px;
    padding-left: 10px;
    font-size: 14px;
    margin-right: 21px;
}

.wallet-input-link {
    width: 435px;
}

.wallet-x {
    width: 14px;
    height: 14px;
    margin-left: 21px;
    margin-top: 4px;
}

.add-wallet {
    margin-top: 17px;
}

.save-crypto {
    margin-top: 34px;
}

/* additional fields */
.fields-body {
    padding-top: 24px;
}

.field-box {
    background: #f0f0f0;
    border: 1px solid #dedede;
    border-radius: 6px;
    height: 352px;
}

.field-main {
    height: 316px;
    padding: 0 12px 0 10px;
    border-bottom: 1px solid #dedede;
}

.field-pair {
    display: flex;
    gap: 10.500px;
}

.pair-col {
    width: 305px;
}

.pair-col .text-input,
.select-like {
    margin-top: 4px;
}

.select-like {
    height: 30px;
    padding: 0 6px;
    background: #fff;
    border: 1px solid #7e8993;
    border-radius: 4px;
    font-size: 13px;
    line-height: 26px;
    color: #3c434a;
    display: flex;
    justify-content: space-between;
    align-items: center;
}

.select-like svg {
    width: 12px;
    height: 12px;
    margin-right: 1px;
}

.desc-label {
    margin-top: 12px;
}

.wide {
    margin-top: 4px;
}

.check-row {
    display: flex;
    align-items: center;
    height: 18px;
    margin-top: 12px;
    font-size: 13px;
    letter-spacing: -.15px;
    color: #3c434a;
}

.check-row input {
    appearance: none;
    width: 18px;
    height: 18px;
    margin: 0 10px 0 0;
    border: 1px solid #7e8993;
    border-radius: 4px;
    background: #fff;
}

.campaigns-label {
    margin-top: 15px;
}

.campaigns-list {
    margin-top: 4px;
    height: 31px;
    line-height: 29px;
    padding: 0 9px;
    background: #fff;
    border: 1px solid #e2e2e2;
    border-radius: 4px;
    font-size: 13px;
    color: #3c434a;
}

.check-all {
    margin-top: 14px;
}

.field-note {
    display: flex;
    align-items: center;
    margin-top: 15px;
    font-size: 10px;
    letter-spacing: -.15px;
    line-height: 14px;
    color: #444;
}

.field-note svg {
    width: 10px;
    height: 10px;
    margin-right: 3px;
}

.field-foot {
    text-align: right;
    padding: 8px 11px 0 0;
    line-height: 18px;
}

.add-field {
    margin-top: 18px;
}

.save-fields {
    margin-top: 50px;
}

/* credits */
.card-closed {
    margin-bottom: 0;
}

.credits {
    display: flex;
    justify-content: space-between;
    align-items: flex-start;
    margin-top: 41px;
    width: 920px;
}

.credits-left {
    display: flex;
    align-items: flex-start;
    padding-left: 41px;
}

.tree {
    width: 28px;
    height: 48px;
}

.tree-text {
    margin: 11px 0 0 12px;
    width: 74px;
    font-size: 7px;
    line-height: 9px;
    letter-spacing: .3px;
    color: #555;
}

.created {
    margin-top: 13px;
    font-size: 12px;
    font-weight: 500;
    line-height: 14px;
    color: #444;
}

.created a,
.credits-links a {
    color: #0073aa;
}

.credits-links {
    margin-top: 20px;
    font-size: 12px;
    font-weight: 500;
    line-height: 14px;
    display: flex;
}

.credits-links a + a {
    margin-left: 8px;
    padding-left: 8px;
    border-left: 1px solid #d5d5d5;
}

.wp-footer {
    position: absolute;
    left: 20px;
    right: 22px;
    bottom: 12px;
    display: flex;
    justify-content: space-between;
    font-size: 13px;
    line-height: 16px;
    color: #50575e;
}

.thanks {
    font-style: italic;
}

.thanks a {
    color: #2271b1;
    text-decoration: underline;
}

.fab {
    position: fixed;
    left: 1176px;
    top: 2844px;
    width: 64px;
    height: 64px;
    border-radius: 50%;
    background: #0085ba;
}

.fab svg {
    display: block;
}
```
